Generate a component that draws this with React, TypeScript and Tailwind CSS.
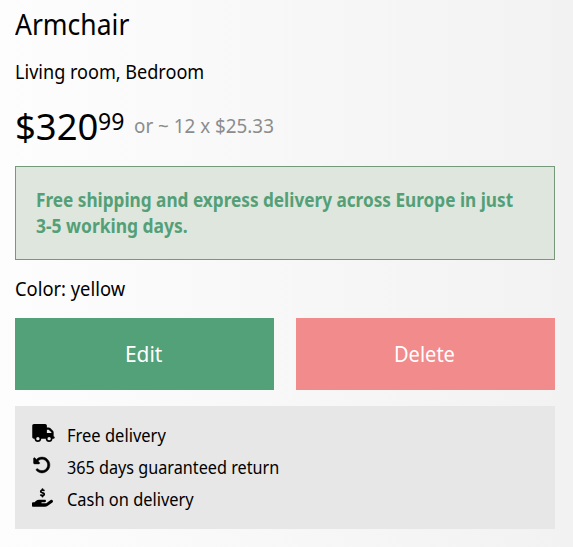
import { useLayoutEffect, useRef, useState } from "react";
import { FaHandHoldingDollar, FaTruck, FaRotateLeft } from "react-icons/fa6";

// Condenses a line of text to the given width.
function Line({ width, className = "", children }: { width: number; className?: string; children: string }) {
  const ref = useRef<HTMLSpanElement>(null);
  const [scale, setScale] = useState(1);
  useLayoutEffect(() => {
    if (ref.current) setScale(width / ref.current.offsetWidth);
  }, [width]);
  return (
    <span className={`block whitespace-nowrap ${className}`} style={{ width }}>
      <span ref={ref} className="inline-block origin-left" style={{ transform: `scaleX(${scale})` }}>
        {children}
      </span>
    </span>
  );
}

const perks = [
  { icon: <FaTruck className="h-[18px] w-[23px]" />, text: "Free delivery", width: 99 },
  { icon: <FaRotateLeft className="ml-px h-[18px] w-[18px] stroke-black stroke-[14px]" />, text: "365 days guaranteed return", width: 212 },
  { icon: <FaHandHoldingDollar className="h-[19px] w-[21px]" />, text: "Cash on delivery", width: 126.5 },
];

export default function App() {
  return (
    <main className="h-[547px] w-[573px] bg-linear-to-r from-[#fdfdfd] to-[#f2f2f2] pl-[15px] pr-[18px] pt-1 font-['Noto_Sans','Open_Sans',sans-serif] text-black">
      <h1 className="h-[55px] text-[29.5px] leading-10">
        <Line width={114}>Armchair</Line>
      </h1>
      <p className="h-[45px] text-[19.5px] leading-[26px]">
        <Line width={189}>Living room, Bedroom</Line>
      </p>
      <div className="flex h-[62px] items-start">
        <Line width={83} className="-mt-px text-[36px] leading-[48px]">$320</Line>
        <Line width={26} className="text-[23px] leading-[34px]">99</Line>
        <Line width={140} className="ml-2.5 pt-[9px] text-[19.5px] leading-[26px] text-[#8c8c8c]">or ~ 12 x $25.33</Line>
      </div>
      <div className="h-[94px] border border-[#76997a] bg-[#dfe6dd] px-5 pt-5 text-[19.5px] leading-[26px] font-bold text-[#53a078]">
        <Line width={477}>Free shipping and express delivery across Europe in just</Line>
        <Line width={152}>3-5 working days.</Line>
      </div>
      <p className="h-[58px] pt-4 text-[19.5px] leading-[26px]">
        <Line width={110}>Color: yellow</Line>
      </p>
      <div className="grid h-[72px] grid-cols-2 gap-[22px] text-[22px] leading-[30px] text-white">
        <button className="flex items-center justify-center bg-[#53a178] pr-0.5 pb-0.5">
          <Line width={37}>Edit</Line>
        </button>
        <button className="flex items-center justify-center bg-[#f28b8b] pr-0.5 pb-0.5">
          <Line width={61}>Delete</Line>
        </button>
      </div>
      <ul className="mt-4 h-[123px] bg-[#e7e7e7] pl-[17px] pt-[13px] text-[17.5px] leading-8">
        {perks.map((perk) => (
          <li key={perk.text} className="flex h-8">
            <span className="w-[34.5px] pt-[5px]">{perk.icon}</span>
            <Line width={perk.width}>{perk.text}</Line>
          </li>
        ))}
      </ul>
    </main>
  );
}
